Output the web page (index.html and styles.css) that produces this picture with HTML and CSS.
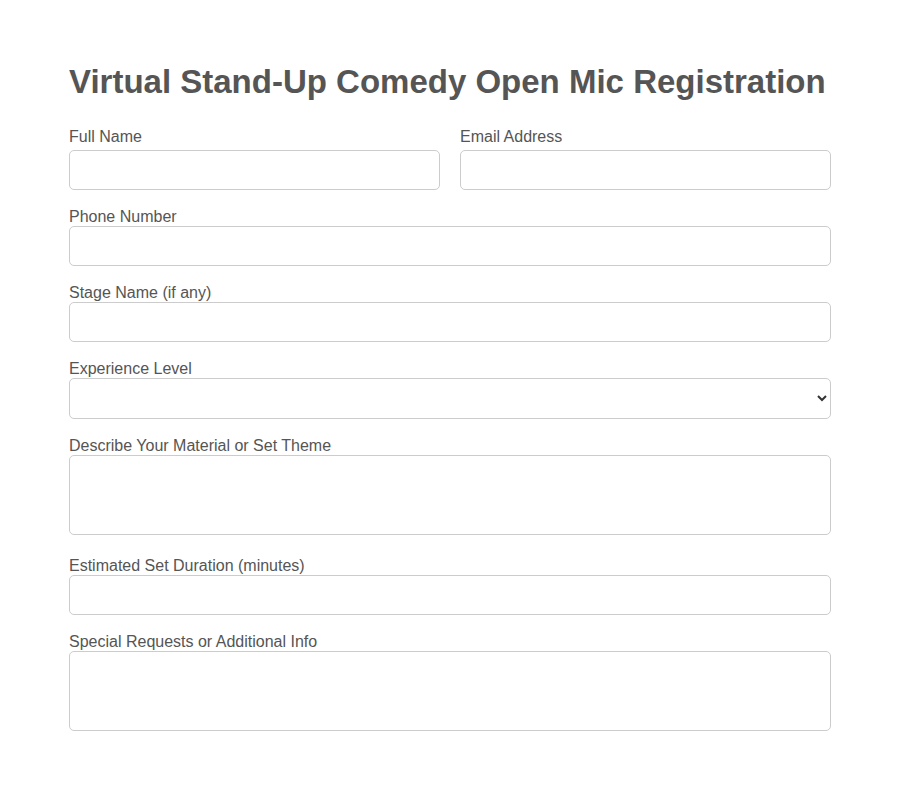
FILE: index.html
```html
<!DOCTYPE html>
<html lang="en">
<head>
<meta charset="utf-8">
<title>Virtual Stand-Up Comedy Open Mic Registration</title>
<link rel="stylesheet" href="styles.css">
</head>
<body>
<div class="container">
  <h1 class="title">Virtual Stand-Up Comedy Open Mic Registration</h1>
  <form class="form">
    <div class="row">
      <div class="group">
        <label class="label" for="fullname">Full Name</label>
        <input class="field" type="text" id="fullname">
      </div>
      <div class="group">
        <label class="label" for="email">Email Address</label>
        <input class="field" type="email" id="email">
      </div>
    </div>
    <div class="group">
      <label class="label" for="phone">Phone Number</label>
      <input class="field" type="tel" id="phone">
    </div>
    <div class="group">
      <label class="label" for="stage">Stage Name (if any)</label>
      <input class="field" type="text" id="stage">
    </div>
    <div class="group">
      <label class="label" for="exp">Experience Level</label>
      <select class="field select" id="exp">
        <option value=""></option>
        <option>Beginner</option>
        <option>Intermediate</option>
        <option>Advanced</option>
      </select>
    </div>
    <div class="group">
      <label class="label" for="material">Describe Your Material or Set Theme</label>
      <textarea class="field area" id="material"></textarea>
    </div>
    <div class="group">
      <label class="label" for="duration">Estimated Set Duration (minutes)</label>
      <input class="field" type="number" id="duration">
    </div>
    <div class="group">
      <label class="label" for="requests">Special Requests or Additional Info</label>
      <textarea class="field area" id="requests"></textarea>
    </div>
  </form>
</div>
</body>
</html>
```
FILE: styles.css
```css
html, body {
  margin: 0;
  padding: 0;
  background: #ffffff;
}

body {
  font-family: "Liberation Sans", Arial, sans-serif;
  color: #555555;
}

.container {
  width: 762px;
  margin: 0 auto;
  padding-top: 63px;
}

.title {
  margin: 0 0 26px;
  font-size: 33px;
  font-weight: bold;
  color: #555555;
  line-height: normal;
}

.form {
  display: block;
}

.row {
  display: grid;
  grid-template-columns: 1fr 1fr;
  column-gap: 20px;
}

.group {
  display: flex;
  flex-direction: column;
  margin-bottom: 17px;
}

.label {
  display: block;
  font-size: 16px;
  line-height: 19px;
  margin-bottom: 0;
  color: #555555;
}

.row .label {
  margin-bottom: 4px;
}

.field {
  display: block;
  width: 100%;
  box-sizing: border-box;
  height: 40px;
  padding: 10px;
  border: 1px solid #cccccc;
  border-radius: 5px;
  background: #ffffff;
  font-family: "Liberation Sans", Arial, sans-serif;
  font-size: 16px;
  color: #333333;
  margin: 0;
}

.select {
  height: 41px;
  padding: 8px 6px;
}

.area {
  height: 80px;
  resize: none;
  margin-bottom: 4px;
}
```
